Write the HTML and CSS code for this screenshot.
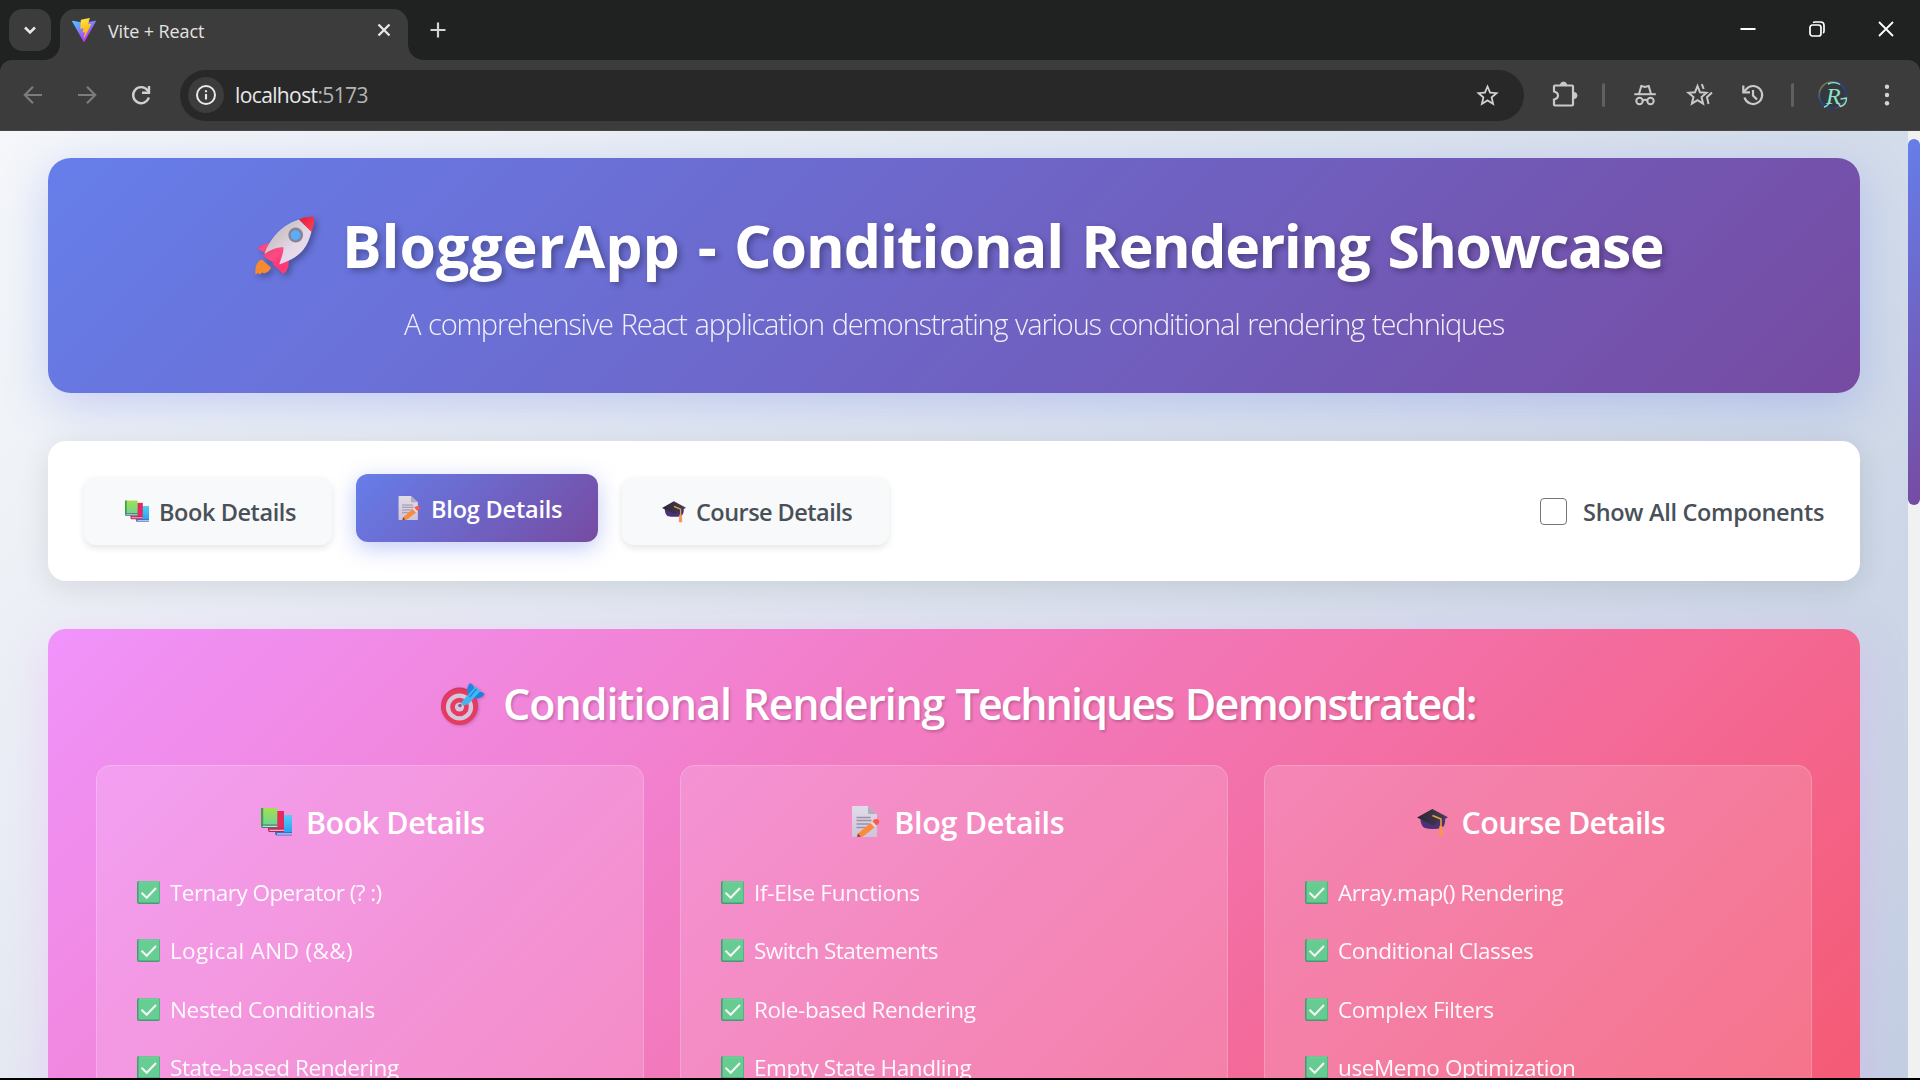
FILE: index.html
```html
<!DOCTYPE html>
<html lang="en">
<head>
<meta charset="utf-8">
<title>Vite + React</title>
<link rel="stylesheet" href="styles.css">
</head>
<body>
<svg class="sprite" aria-hidden="true">
  <defs>
    <linearGradient id="g-vite" x1="0" y1="0" x2="0.6" y2="0.9"><stop offset="0" stop-color="#41d1ff"/><stop offset="1" stop-color="#bd34fe"/></linearGradient>
    <linearGradient id="g-bolt" x1="0.4" y1="0" x2="0.6" y2="1"><stop offset="0" stop-color="#ffea83"/><stop offset="0.1" stop-color="#ffdd35"/><stop offset="1" stop-color="#ffa800"/></linearGradient>
    <linearGradient id="g-hull" x1="0" y1="0" x2="1" y2="1"><stop offset="0" stop-color="#c9c2c6"/><stop offset="0.35" stop-color="#cfc7cd"/><stop offset="0.6" stop-color="#e4d9e8"/><stop offset="1" stop-color="#ecdcf3"/></linearGradient>
    <linearGradient id="g-fin" x1="0" y1="0" x2="1" y2="1"><stop offset="0" stop-color="#e23a68"/><stop offset="0.5" stop-color="#ff4a86"/><stop offset="1" stop-color="#f52f6d"/></linearGradient>
    <linearGradient id="g-nose" x1="0" y1="0" x2="1" y2="1"><stop offset="0" stop-color="#e01b3c"/><stop offset="1" stop-color="#ff4458"/></linearGradient>
    <linearGradient id="g-green" x1="0" y1="0" x2="0" y2="1"><stop offset="0" stop-color="#a3e04f"/><stop offset="1" stop-color="#6fd495"/></linearGradient>
    <linearGradient id="g-blue" x1="0" y1="0" x2="0" y2="1"><stop offset="0" stop-color="#50d0f5"/><stop offset="1" stop-color="#2f9bf0"/></linearGradient>
    <linearGradient id="g-paper" x1="0" y1="0" x2="0" y2="1"><stop offset="0" stop-color="#e2dbe8"/><stop offset="1" stop-color="#cfc4da"/></linearGradient>
    <linearGradient id="g-board" x1="0" y1="0" x2="1" y2="0"><stop offset="0" stop-color="#2b2535"/><stop offset="0.6" stop-color="#3d3447"/><stop offset="1" stop-color="#4c3d66"/></linearGradient>
    <linearGradient id="g-ring" x1="0" y1="0" x2="1" y2="1"><stop offset="0" stop-color="#a98a2a"/><stop offset="0.4" stop-color="#24479e"/><stop offset="0.75" stop-color="#243c86"/><stop offset="1" stop-color="#a3523a"/></linearGradient>
  </defs>
  <symbol id="rocket" viewBox="0 0 60 60">
    <path d="M7 44.5C2 46 0 51 0.3 59.5L3 58l2 1.5 2-2 2 1c4-1 6-3 7-6z" fill="#f58a33"/>
    <path d="M2.3 33.3C6 30 10 28.6 15 28l-5 10z" fill="url(#g-fin)"/>
    <path d="M33.5 45.5c1 5-1 10-5 13.8L17 48.5z" fill="#ff3974"/>
    <path d="M44 4.5C33 8 25 14 19.5 21 14 28 11 34 9.5 38.5L22.5 50c10-3 20-8 26-15.5 4-5 6.5-12 8-18z" fill="url(#g-hull)"/>
    <path d="M44 4.5C49 2 55 1.2 58.7 2 59.8 6 58.5 12 56.5 17z" fill="url(#g-nose)"/>
    <path d="M28.5 32.5C24 31 12 36 7.5 41L24 51c1-6 4.5-11 4.5-18.5z" fill="url(#g-fin)"/>
    <circle cx="40.7" cy="20" r="7.4" fill="#8a8292"/><circle cx="40.5" cy="20.2" r="4.9" fill="#58aef8"/>
  </symbol>
  <symbol id="target" viewBox="0 0 44 44">
    <circle cx="18.5" cy="24" r="18.5" fill="#c93a66"/><circle cx="18.5" cy="25" r="18" fill="#e63a62"/>
    <circle cx="18.5" cy="25" r="13.6" fill="#d5c8dc"/><circle cx="18.5" cy="25" r="9.3" fill="#e73b62"/><circle cx="18.5" cy="25" r="4.6" fill="#d5c8dc"/>
    <circle cx="19" cy="23.5" r="1.8" fill="#8b5a86"/>
    <path d="M29 1c3 1.5 4.5 4 4.6 7L28 14c-3-5-2-9.5 1-13z" fill="#1f87e0"/>
    <path d="M36 10c3.5-.5 6 .3 7.5 2-2 3.5-6 5.2-11 4z" fill="#1c7fd8"/>
    <path d="M21 19.5l13.5-15 5 4.500L28 21.500c-3 2-6 2.500-7.500.5z" fill="#45b5f0"/>
    <path d="M28.5 15l7-8" stroke="#1f87e0" stroke-width="1.5"/>
  </symbol>
  <symbol id="books" viewBox="0 0 31 31">
    <path d="M14 9h17v18.5H14z" fill="url(#g-blue)"/><path d="M14 26h17v3.5H15q-1-1-1-3.5z" fill="#3d6fc9"/><path d="M16 27.3h15v1.3H16z" fill="#cfc9f2"/>
    <path d="M7 5h16v18H7z" fill="#e42a5d"/><path d="M7 22.5h16V26H8q-1-1-1-3.5z" fill="#b8214f"/><path d="M8.5 23.7H23v1.2H8.5z" fill="#e8cfe0"/>
    <path d="M0 2h16.3v17H0z" fill="url(#g-green)"/><path d="M0 2h2.2v17H0z" fill="#3f9f4a"/><path d="M0 18.5h16.3V22H1q-1-1-1-3.5z" fill="#467a6d"/><path d="M1.5 19.7h14.8V21H1.5z" fill="#cbd3e0"/>
  </symbol>
  <symbol id="memo" viewBox="0 0 31 31">
    <path d="M2 1q0-1 1-1h15l9 8v22q0 1-1 1H3q-1 0-1-1z" fill="url(#g-paper)"/><path d="M18 0l9 8h-8q-1 0-1-1z" fill="#b5abc0"/>
    <path d="M6.500 11.5h14M6.500 14.5h15M6.500 18h13M6.500 21.5h9" stroke="#9d93a8" stroke-width="1.3"/>
    <path d="M7 31l1-3.5L21 16.5l4 4.5-12 9.5z" fill="#fb8a3c"/><path d="M7 31l1-3.5 3 3.300z" fill="#7d4a42"/>
    <path d="M20.5 17l2-1.7 4 4.2-2 1.8z" fill="#e6d9ec"/><path d="M22.5 15.3l1.7-1.7q2.4-1.5 4.5.3 1.5 2-.2 3.8l-2 1.8z" fill="#fa5b45"/>
  </symbol>
  <symbol id="cap" viewBox="0 0 31 31">
    <path d="M3.500 13h24.700c0 4-.7 7-3.200 8.800q-9 2.500-18 0C4.500 20 3.500 16 3.500 13z" fill="#4a3277"/>
    <path d="M15.300 3L31 11.300 16.200 19.500 0 11.500z" fill="url(#g-board)"/>
    <path d="M15.500 9.500l8.500 3.600v8" fill="none" stroke="#e5a93c" stroke-width="1.500"/>
    <path d="M22.400 20h3l.8 9.500q-2.300 1.500-4.600 0z" fill="#fb9354"/>
  </symbol>
  <symbol id="check" viewBox="0 0 23 23">
    <rect width="23" height="23" rx="2" fill="#3f9b70"/><rect x="1.5" y="1" width="21" height="20.5" rx="1.2" fill="#5fd08f"/><path d="M2 .8h20" stroke="#84d8a5" stroke-width="1"/>
    <path d="M4.500 11.800l5.200 5L19 7" fill="none" stroke="#f5fbf7" stroke-width="2.100"/>
  </symbol>
</svg>

<div class="browser">
  <div class="tabstrip">
    <div class="tab-search"><svg width="14" height="10" viewBox="0 0 14 10"><path d="M2 2.500l5 5 5-5" fill="none" stroke="#e8e8e8" stroke-width="2.500"/></svg></div>
    <div class="tab">
      <svg class="favicon" viewBox="0 0 256 257"><path fill="url(#g-vite)" d="M255.153 37.938L134.897 252.976c-2.483 4.440-8.862 4.466-11.382.048L.875 37.958c-2.746-4.814 1.371-10.646 6.827-9.670l120.385 21.517a6.537 6.537 0 0 0 2.322-.004l117.867-21.483c5.438-.991 9.574 4.796 6.877 9.620Z"/><path fill="url(#g-bolt)" d="M185.432.063L96.440 17.501a3.268 3.268 0 0 0-2.634 3.014l-5.474 92.456a3.268 3.268 0 0 0 3.997 3.378l24.777-5.718c2.318-.535 4.413 1.507 3.936 3.838l-7.361 36.047c-.495 2.426 1.782 4.500 4.151 3.780l15.304-4.649c2.372-.720 4.652 1.360 4.150 3.788l-11.698 56.621c-.732 3.542 3.979 5.473 5.943 2.437l1.313-2.028l72.516-144.720c1.215-2.423-.880-5.186-3.540-4.672l-25.505 4.922c-2.396.462-4.435-1.770-3.759-4.114l16.646-57.705c.677-2.350-1.370-4.583-3.769-4.113Z"/></svg>
      <span class="tab-title">Vite + React</span>
      <svg width="14" height="14" viewBox="0 0 14 14"><path d="M1.500 1.500l11 11M12.500 1.500l-11 11" stroke="#e8e8e8" stroke-width="2.300"/></svg>
    </div>
    <svg class="new-tab" width="16" height="16" viewBox="0 0 16 16"><path d="M8 .5v15M.5 8h15" stroke="#d4d4d4" stroke-width="2.200"/></svg>
    <div class="window-controls">
      <svg width="16" height="16" viewBox="0 0 16 16"><path d="M.5 8h15" stroke="#fff" stroke-width="2"/></svg>
      <svg width="16" height="16" viewBox="0 0 16 16" fill="none" stroke="#fff" stroke-width="1.700"><rect x="1" y="4" width="11" height="11" rx="2.500"/><path d="M4 1.500Q5 1 6 1h5.500Q15 1 15 4.500V10q0 1.500-1 2"/></svg>
      <svg width="16" height="16" viewBox="0 0 16 16"><path d="M1 1l14 14M15 1L1 15" stroke="#fff" stroke-width="1.800"/></svg>
    </div>
  </div>

  <div class="toolbar">
    <div class="nav-icons">
      <svg width="24" height="24" viewBox="0 0 24 24" fill="none" stroke="#7d7d7d" stroke-width="2.100"><path d="M21 12H4.500M12 3.800L3.800 12l8.200 8.200"/></svg>
      <svg width="24" height="24" viewBox="0 0 24 24" fill="none" stroke="#7d7d7d" stroke-width="2.100"><path d="M3 12h16.500M12 3.800l8.200 8.200-8.200 8.200"/></svg>
      <svg width="24" height="24" viewBox="0 0 24 24" fill="none" stroke="#cfcfcf" stroke-width="2.400"><path d="M19.800 14.500A8 8 0 1 1 18.500 7.300L20 9"/><path d="M20 3v6.800h-7"/></svg>
    </div>
    <div class="address">
      <div class="site-info"><svg width="22" height="22" viewBox="0 0 22 22"><circle cx="11" cy="11" r="9" fill="none" stroke="#e8e8e8" stroke-width="2"/><path d="M11 10v5.500M11 6.200v2.100" stroke="#e8e8e8" stroke-width="2.100"/></svg></div>
      <span class="url">localhost<span class="port">:5173</span></span>
      <svg class="bookmark" width="27" height="27" viewBox="0 0 24 24"><path fill="#cfcfcf" d="M22 9.240l-7.190-.620L12 2 9.190 8.630 2 9.240l5.460 4.730L5.820 21 12 17.270 18.180 21l-1.630-7.030L22 9.240zM12 15.400l-3.760 2.270 1-4.280-3.320-2.880 4.380-.380L12 6.100l1.710 4.040 4.380.380-3.320 2.880 1 4.280L12 15.400z"/></svg>
    </div>
    <svg class="puzzle" width="28" height="28" viewBox="0 0 28 28"><path d="M4 5.500q0-1 1-1h17q1 0 1 1v18q0 1-1 1H5q-1 0-1-1v-5q4-1 4-4t-4-4z" fill="none" stroke="#c9c9c9" stroke-width="2.200"/><path d="M10.500 4a3 3 0 0 1 6 0zM24 11.500a3 3 0 0 1 0 6z" fill="#c9c9c9" stroke="#c9c9c9"/></svg>
    <i class="divider"></i>
    <svg class="incognito" width="24" height="24" viewBox="0 0 24 24" fill="none" stroke="#c9c9c9" stroke-width="2"><path d="M1.300 11.200h21.500"/><path d="M6 11l2.300-8 3.700 1 3.700-1L18 11"/><circle cx="6.500" cy="18" r="3.200"/><circle cx="17.500" cy="18" r="3.200"/><path d="M9.500 17.500q2.500-1.300 5 0"/></svg>
    <svg class="favorites" width="28" height="28" viewBox="0 0 28 28" fill="none" stroke="#c9c9c9" stroke-width="2"><path d="M12.500 5l2.500 6.300 6.500.5-5 4.300 1.600 6.600-5.600-3.500-5.600 3.500L8.500 16l-5-4.200 6.500-.5z"/><path d="M16.800 3.200l1.900 4.800M27 11.600l-5 4.600 1.500 6.800"/></svg>
    <svg class="history" width="26" height="26" viewBox="0 0 26 26" fill="none" stroke="#c9c9c9" stroke-width="2.200"><path d="M4.500 15.500A9 9 0 1 0 6 7.500L3.500 10"/><path d="M3.300 3.500v6.800H10M13 8v5.500l4 4"/></svg>
    <i class="divider divider-end"></i>
    <svg class="avatar" width="30" height="32" viewBox="0 0 30 32"><circle cx="14.500" cy="16" r="13.300" fill="#343a3c" stroke="url(#g-ring)" stroke-width="1.600"/><text x="8" y="25" class="avatar-letter">R</text><path d="M10 5q7-3 12 .5M6 28q4-1 5.500-5M22.500 20l6-1q0 7-6 8.500l-3-4" fill="none" stroke="#8de3cb" stroke-width="1.400"/></svg>
    <svg class="more" width="24" height="24" viewBox="0 0 24 24" fill="#d4d4d4"><circle cx="12" cy="3.800" r="2.200"/><circle cx="12" cy="12" r="2.200"/><circle cx="12" cy="20.200" r="2.200"/></svg>
  </div>

  <div class="viewport">
    <main class="page">
      <header class="hero">
        <h1><svg class="emoji-xl"><use href="#rocket"/></svg><span><span class="w-app">BloggerApp</span> - <span class="w-conditional">Conditional</span> <span class="w-rendering">Rendering</span> <span class="w-showcase">Showcase</span></span></h1>
        <p>A comprehensive React application demonstrating various conditional rendering techniques</p>
      </header>

      <nav class="controls">
        <button class="btn btn-book"><svg class="emoji-sm"><use href="#books"/></svg><span>Book Details</span></button>
        <button class="btn btn-blog active"><svg class="emoji-sm"><use href="#memo"/></svg><span>Blog Details</span></button>
        <button class="btn btn-course"><svg class="emoji-sm"><use href="#cap"/></svg><span>Course Details</span></button>
        <label class="show-all"><i class="box"></i><span>Show All Components</span></label>
      </nav>

      <section class="techniques">
        <h2><svg class="emoji-lg"><use href="#target"/></svg><span><span class="w-first">Conditional</span> Rendering <span class="w-techniques">Techniques</span> <span class="w-demonstrated">Demonstrated:</span></span></h2>
        <div class="cards">
          <article class="card book">
            <h3><svg class="emoji-md"><use href="#books"/></svg><span>Book Details</span></h3>
            <ul>
              <li><svg class="tick"><use href="#check"/></svg><span>Ternary Operator (? :)</span></li>
              <li><svg class="tick"><use href="#check"/></svg><span>Logical AND (&amp;&amp;)</span></li>
              <li><svg class="tick"><use href="#check"/></svg><span>Nested Conditionals</span></li>
              <li><svg class="tick"><use href="#check"/></svg><span>State-based Rendering</span></li>
            </ul>
          </article>
          <article class="card blog">
            <h3><svg class="emoji-md"><use href="#memo"/></svg><span>Blog Details</span></h3>
            <ul>
              <li><svg class="tick"><use href="#check"/></svg><span>If-Else Functions</span></li>
              <li><svg class="tick"><use href="#check"/></svg><span>Switch Statements</span></li>
              <li><svg class="tick"><use href="#check"/></svg><span>Role-based Rendering</span></li>
              <li><svg class="tick"><use href="#check"/></svg><span>Empty State Handling</span></li>
            </ul>
          </article>
          <article class="card course">
            <h3><svg class="emoji-md"><use href="#cap"/></svg><span>Course Details</span></h3>
            <ul>
              <li><svg class="tick"><use href="#check"/></svg><span>Array.map() Rendering</span></li>
              <li><svg class="tick"><use href="#check"/></svg><span>Conditional Classes</span></li>
              <li><svg class="tick"><use href="#check"/></svg><span>Complex Filters</span></li>
              <li><svg class="tick"><use href="#check"/></svg><span>useMemo Optimization</span></li>
            </ul>
          </article>
        </div>
      </section>
    </main>
    <div class="scrollbar"><div class="thumb"></div></div>
  </div>
</div>
</body>
</html>
```
FILE: styles.css
```css
* { box-sizing: border-box; margin: 0; padding: 0; }
body { background: #000; font-family: "Open Sans", "Noto Sans", sans-serif; overflow: hidden; }
svg { display: block; flex: none; }
.sprite { position: absolute; width: 0; height: 0; }
.browser { width: 1920px; height: 1080px; display: flex; flex-direction: column; background: #202221; border-bottom: 2px solid #000; overflow: hidden; }

/* Tab strip */
.tabstrip { height: 60px; flex: none; display: flex; align-items: flex-start; padding: 9px 26px 0 9px; background: #202221; }
.tab-search { width: 42px; height: 42px; border-radius: 14px; background: #3c3c3c; display: grid; place-items: center; }
.tab { position: relative; width: 348px; height: 51px; margin-left: 9px; padding: 0 17px 9px 12px; border-radius: 15px 15px 0 0; background: #3c3c3c; display: flex; align-items: center; }
.tab::before, .tab::after { content: ""; position: absolute; bottom: 0; width: 15px; height: 15px; }
.tab::before { left: -15px; background: radial-gradient(circle at 0 0, transparent 14.5px, #3c3c3c 15px); }
.tab::after { right: -15px; background: radial-gradient(circle at 100% 0, transparent 14.5px, #3c3c3c 15px); }
.favicon { width: 24px; height: 24px; }
.tab-title { flex: 1; margin-left: 12px; padding-top: 2px; font-size: 18px; line-height: 24px; letter-spacing: -.12px; color: #e3e3e3; }
.new-tab { margin: 13px 0 0 22px; }
.window-controls { margin: 12px 0 0 auto; display: flex; gap: 53px; }

/* Toolbar */
.toolbar { height: 71px; flex: none; display: flex; align-items: center; padding-left: 21px; background: #3c3c3c; border-bottom: 1px solid #474747; border-radius: 12px 12px 0 0; }
.nav-icons { display: flex; gap: 30px; }
.address { width: 1344px; height: 51px; margin-left: 27px; padding: 0 23px 0 8px; border-radius: 26px; background: #282828; display: flex; align-items: center; }
.site-info { width: 36px; height: 36px; border-radius: 50%; background: #3c3c3c; display: grid; place-items: center; }
.url { flex: 1; margin-left: 11px; padding-bottom: 1px; font-size: 21px; line-height: 30px; letter-spacing: -.62px; color: #e8e8e8; }
.port { color: #b4b4b4; }
.puzzle { margin-left: 26px; margin-right: 1px; }
.divider { width: 3px; height: 24px; margin-left: 23px; border-radius: 1.5px; background: #606060; }
.incognito, .favorites { margin-left: 28px; }
.history { margin-left: 27px; }
.divider-end { margin-left: 25px; }
.avatar { margin-left: 24px; }
.avatar-letter { font: italic 24px "Liberation Serif", serif; fill: #8de3cb; }
.more { margin-left: 27px; }

/* Page */
.viewport { flex: 1; min-height: 0; display: flex; background: #f1f1f1; }
.page { width: 1908px; height: 947px; padding: 27px 48px 0; overflow: hidden; background: linear-gradient(135deg, #f5f7fa 0%, #c3cfe2 100%); }
.scrollbar { width: 12px; padding-top: 8px; background: #f1f1f1; }
.thumb { height: 366px; border-radius: 6px; background: linear-gradient(135deg, #667eea, #764ba2); }

.hero { height: 235px; padding-top: 51px; border-radius: 22.5px; background: linear-gradient(135deg, #667eea 0%, #764ba2 100%); box-shadow: 0 12px 48px rgba(102, 126, 234, .3); color: #fff; text-align: center; }
.hero h1 { display: flex; align-items: center; justify-content: center; gap: 27px; padding-left: 10px; font-size: 59px; line-height: 72px; font-weight: 700; letter-spacing: -.6px; word-spacing: 3.2px; text-shadow: 3px 3px 6px rgba(0, 0, 0, .3); }
.w-app { letter-spacing: 0; }
.w-conditional { letter-spacing: -1.05px; }
.w-rendering { letter-spacing: -1.5px; }
.w-showcase { letter-spacing: -1.6px; }
.hero p { margin-top: 21px; font-size: 29px; line-height: 44px; font-weight: 300; letter-spacing: -1.2px; word-spacing: 1.5px; opacity: .9; }
.emoji-xl { width: 60px; height: 60px; filter: drop-shadow(3px 3px 3px rgba(0, 0, 0, .3)); }
.emoji-lg { width: 44px; height: 44px; filter: drop-shadow(1.5px 1.5px 1.5px rgba(0, 0, 0, .2)); }
.emoji-md { width: 31px; height: 31px; }
.emoji-sm { width: 24px; height: 24px; }

.controls { height: 140px; margin-top: 48px; padding: 36px; display: flex; gap: 24px; border-radius: 18px; background: #fff; box-shadow: 0 6px 30px rgba(0, 0, 0, .1); }
.btn { height: 68px; padding-left: 41px; display: flex; align-items: center; gap: 10px; border: 0; border-radius: 12px; background: #f8f9fa; color: #495057; box-shadow: 0 3px 7.5px rgba(0, 0, 0, .1); font: 600 23.5px/34px "Open Sans", "Noto Sans", sans-serif; white-space: nowrap; }
.btn span, .show-all span { padding-top: 2px; }
.btn-book { width: 248px; letter-spacing: -.42px; }
.btn-blog { width: 242px; letter-spacing: -.2px; }
.btn-course { width: 267px; padding-left: 40px; letter-spacing: -.54px; }
.btn.active { transform: translateY(-3px); background: linear-gradient(135deg, #667eea 0%, #764ba2 100%); color: #fff; box-shadow: 0 6px 22.5px rgba(102, 126, 234, .4); }
.show-all { margin-left: auto; display: flex; align-items: center; gap: 16px; color: #495057; font-size: 23.5px; line-height: 34px; font-weight: 600; letter-spacing: -.32px; }
.box { width: 27px; height: 27px; border: 1.5px solid #767676; border-radius: 4px; background: #fff; }

.techniques { height: 590px; margin-top: 48px; padding: 45.4px 48px 0; border-radius: 18px; background: linear-gradient(135deg, #f093fb 0%, #f5576c 100%); box-shadow: 0 12px 48px rgba(240, 147, 251, .3); color: #fff; }
.techniques h2 { display: flex; align-items: center; justify-content: center; gap: 18px; padding-left: 9px; font-size: 43px; line-height: 60px; font-weight: 600; letter-spacing: -1.25px; word-spacing: 1.5px; text-shadow: 1.5px 1.5px 3px rgba(0, 0, 0, .2); }
.w-first { letter-spacing: -1px; }
.w-techniques { letter-spacing: -1.9px; }
.w-demonstrated { letter-spacing: -1.65px; }
.cards { margin-top: 30.6px; display: grid; grid-template-columns: repeat(3, 548px); gap: 36px; }
.card { height: 420px; padding: 36px 40px 0; border: 1px solid rgba(255, 255, 255, .2); border-radius: 15px; background: rgba(255, 255, 255, .15); }
.card h3 { display: flex; align-items: center; justify-content: center; gap: 13.500px; padding-left: 6px; font-size: 30.5px; line-height: 40px; font-weight: 600; letter-spacing: -.47px; }
.card.blog h3 { letter-spacing: -.3px; }
.card.course h3 { letter-spacing: -.64px; }
.card ul { margin-top: 21.5px; list-style: none; }
.card li { height: 58.3px; display: flex; align-items: center; gap: 10px; font-size: 22.5px; line-height: 34px; letter-spacing: -.42px; opacity: .95; }
.card li span { padding-top: 1px; }
.tick { width: 23px; height: 23px; }
.book li:nth-child(1) { letter-spacing: -.55px; }
.book li:nth-child(2) { letter-spacing: .35px; }
.book li:nth-child(3) { letter-spacing: -.35px; }
.blog li:nth-child(1) { letter-spacing: -.27px; }
.blog li:nth-child(2) { letter-spacing: -.56px; }
.course li:nth-child(1) { letter-spacing: -.53px; }
```
